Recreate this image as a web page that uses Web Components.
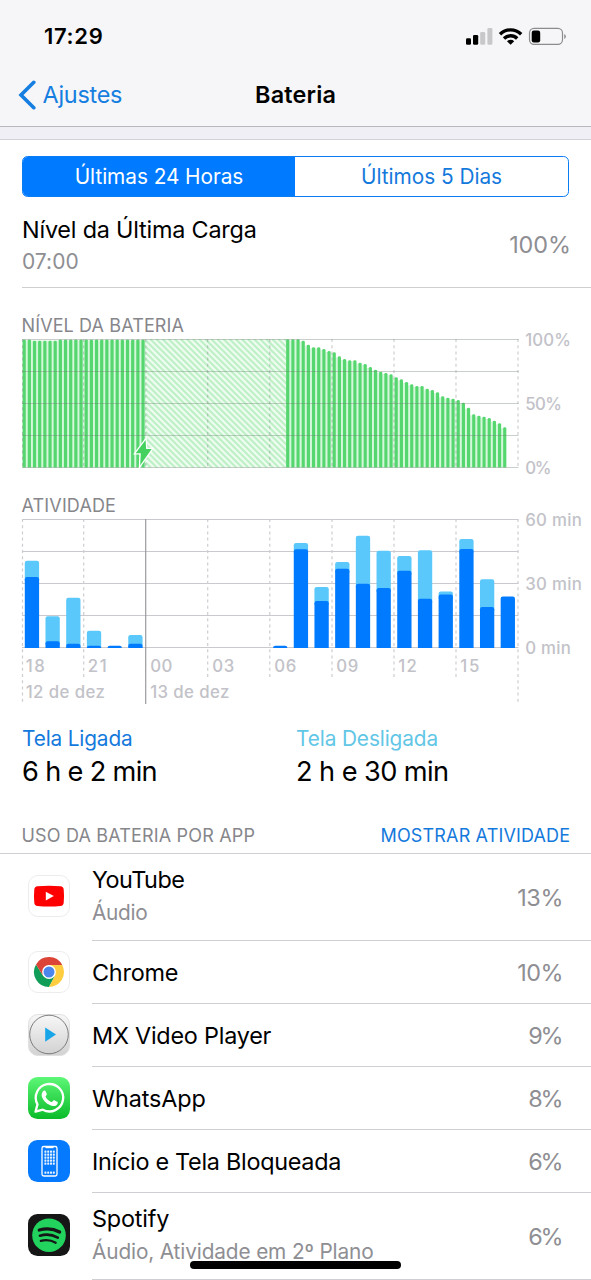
<!DOCTYPE html>
<html lang="pt-BR">
<head>
<meta charset="utf-8">
<title>Bateria</title>
<style>
html,body{margin:0;padding:0;background:#fff}
body{width:591px;height:1280px;overflow:hidden;font-family:Inter,"Liberation Sans",sans-serif;color:#000}
</style>
</head>
<body>
<battery-screen></battery-screen>
<script>
const define=(name,html,setup)=>customElements.define(name,class extends HTMLElement{
  connectedCallback(){
    if(this.shadowRoot)return;
    const root=this.attachShadow({mode:'open'});
    const t=document.createElement('template');
    t.innerHTML=typeof html==='function'?html(this):html;
    root.appendChild(t.content.cloneNode(true));
    if(setup)setup(this,root);
  }
});
const BLUE='#007aff',SKY='#5ac8fa';

/* A single line of text whose tracking is adjusted to a given width. */
define('fit-text',el=>{
  const s=+el.getAttribute('size');
  return `<style>:host{display:block;white-space:pre;font-size:${s}px;line-height:${el.getAttribute('line')||26}px;font-weight:${el.getAttribute('weight')||400};color:${el.getAttribute('color')||'inherit'}}
  span{display:inline-block}</style><span><slot></slot></span>`;
},(el,root)=>{
  const span=root.querySelector('span'),n=el.textContent.length;
  const target=+el.getAttribute('fit')+ +el.getAttribute('size')*0.08;
  const ls=(target-span.getBoundingClientRect().width)/(n-1);
  span.style.letterSpacing=ls.toFixed(3)+'px';
  span.style.marginRight=(-ls).toFixed(3)+'px';
});

define('status-bar',`<style>:host{display:flex;justify-content:space-between;align-items:center;height:60px;box-sizing:border-box;padding:12px 21px 0 44px}
svg{display:block}</style>
<fit-text size="22" weight="600" fit="57">17:29</fit-text>
<svg width="110" height="30" viewBox="460 20 110 30">
<rect x="466" y="37.3" width="5" height="6.5" rx="1.3"/><rect x="473" y="34" width="5.2" height="9.8" rx="1.3"/>
<rect x="480.2" y="31" width="5" height="12.8" rx="1.3" fill="#c8c8ca"/><rect x="487.4" y="27" width="5" height="16.8" rx="1.3" fill="#c8c8ca"/>
<g fill="none" stroke="#000" stroke-width="3.4"><path d="M500 33.2a15.2 15.2 0 0 1 21.2 0"/><path d="M504 37.5a9.4 9.4 0 0 1 13.2 0"/></g>
<path d="M510.6 43.8l-3.6-3.6a5.2 5.2 0 0 1 7.2 0z"/>
<rect x="529.5" y="27.4" width="33" height="16" rx="4.6" fill="none" stroke="#8c8c8e" stroke-width="1.2"/>
<rect x="531.7" y="29.5" width="8.5" height="12" rx="2.2"/><path d="M564.4 33v5a3 3 0 0 0 0-5z" fill="#777"/>
</svg>`);

define('nav-bar',`<style>:host{display:grid;grid-template-columns:1fr auto 1fr;align-items:center;height:66px;padding:0 18px;border-bottom:1px solid #b9b9bd}
.back{display:flex;align-items:center;gap:5.5px;color:#157ee0;padding-top:3px}svg{display:block}.t{padding-top:3px}</style>
<div class="back"><svg width="19" height="30" viewBox="0 0 19 30"><path d="M15.8 2.3L3 15l12.8 12.7" fill="none" stroke="#157ee0" stroke-width="3.6" stroke-linecap="round" stroke-linejoin="miter"/></svg>
<fit-text size="23.4" fit="78" line="28">Ajustes</fit-text></div>
<fit-text class="t" size="23.4" weight="600" fit="79" line="28">Bateria</fit-text>`);

define('segmented-control',`<style>:host{display:grid;grid-template-columns:272px 1fr;height:41px;margin:0 22px;box-sizing:border-box;border-radius:5.5px;overflow:hidden;border:1.5px solid #0a7cf5;background:#fff}
div{display:flex;align-items:center;justify-content:center;color:#1479dc;padding-top:1.5px}.on{background:#007aff;color:#fff}</style>
<div class="on"><fit-text size="20.8" fit="167">Últimas 24 Horas</fit-text></div><div><fit-text size="20.8" fit="139.5">Últimos 5 Dias</fit-text></div>`);

define('last-charge',`<style>:host{display:flex;justify-content:space-between;align-items:center;height:91px;box-sizing:border-box;margin-left:22px;padding:6px 20px 0 0;border-bottom:1px solid #cfcfd2}
.g{display:grid;gap:5px}</style>
<div class="g"><fit-text size="23.4" line="28" fit="233">Nível da Última Carga</fit-text><fit-text size="21" fit="55" color="#8e8e93">07:00</fit-text></div>
<fit-text size="23.4" line="28" fit="60" color="#8e8e93">100%</fit-text>`);

define('section-head',el=>`<style>:host{display:flex;align-items:flex-end;justify-content:space-between;box-sizing:border-box;padding:0 21px 0 21.5px;color:#86868b}</style><slot></slot>`);

const xs=[22.5,83.7,145.7,207.7,269.8,332,394,456,518];
const txt=(x,y,w,s,size=16.8)=>`<text x="${x-.8}" y="${y}" textLength="${w+1.6}" lengthAdjust="spacing" font-size="${size}" font-weight="450" fill="#c2c2c8">${s}</text>`;

define('battery-chart',()=>{
  const z=[88,88,88,92,104,112,112,117,123,127,139,147,151,151,158,162,171,179,185,189,193,202,208,216,223,228,228,236,240,247,259,263,266,270,278,293,313,317,320,324,332,340,352];
  const step=5.167,bx=i=>22.6+i*step;
  let light='',bars='';
  const bar=(i,y)=>{
    bars+=`<path d="M${bx(i)} 467.5V${y+1.2}q0-1.2 1.6-1.2t1.6 1.2V467.5z"/>`;
  };
  for(let i=0;i<24;i++)bar(i,i>1&&i<7?340.8:339.4);
  z.forEach((v,k)=>{const y=310+v/3;bar(51+k,y);
    if(k<z.length-1){const y2=310+z[k+1]/3+1;light+=`<rect x="${bx(51+k)+3}" y="${y2}" width="2.3" height="${467.5-y2}"/>`}});
  let stripes='';
  for(let x=10;x<290;x+=6.1)stripes+=`<path d="M${x} 339l129 129"/>`;
  const hs=[339.5,371.5,403.5,435.5,467.5].map(y=>`<path d="M22 ${y}H518.5"/>`).join('');
  const vs=xs.map(x=>`<path d="M${x} 339V468"/>`).join('');
  return `<style>:host{display:block}svg{display:block;overflow:visible}</style>
  <svg width="591" height="140" viewBox="0 337 591 140">
  <defs><clipPath id="c"><rect x="146" y="339" width="140.5" height="128.5"/></clipPath></defs>
  <g fill="#d4f8da"><rect x="22.6" y="340.5" width="123.4" height="127"/>${light}</g>
  <rect x="146" y="339" width="140.5" height="128.5" fill="#eefcf0"/>
  <g clip-path="url(#c)" stroke="#bdf0c6" stroke-width="2.1">${stripes}</g>
  <g fill="#56d66f">${bars}</g>
  <g stroke="#6b7b70" stroke-opacity=".36">${hs}</g>
  <g stroke="#808086" stroke-opacity=".42" stroke-width="1.1" stroke-dasharray="3 3.2">${vs}</g>
  <path d="M145.6 440l-10 13.200h5.200l-.6 12 11.500-16.200h-5.600z" fill="#45d160" stroke="#fff" stroke-width="2.600" paint-order="stroke"/>
  ${txt(526,346,44,'100%')}${txt(526,410,35,'50%')}${txt(526,474,24.5,'0%')}
  </svg>`;
});

define('activity-chart',()=>{
  const d=[[0,560.8,577],[1,616.3,641.3],[2,597.7,643.7],[3,630.8,645.7],[4,0,645.7],[5,635,643.7],[12,0,645.7],[13,543,549.3],[14,587,601],[15,562,568.7],[16,535.8,583.7],[17,550.7,588],[18,556,570.7],[19,550.3,598.7],[20,591.5,594.5],[21,539,549],[22,579.3,607],[23,0,596.5]];
  const shape=(x,y,b,c)=>{const r=Math.min(2.2,b-y);return `<path fill="${c}" d="M${x} ${b}V${y+r}q0-${r} ${r}-${r}h${14.3-2*r}q${r} 0 ${r} ${r}V${b}z"/>`};
  const bars=d.map(([i,t,k])=>{const x=24.8+i*20.69;return (t?shape(x,t,Math.min(k+4,648),SKY):'')+shape(x,k,648,BLUE)}).join('');
  const hs=[519.5,551.5,583.5,615.5,647.5].map(y=>`<path d="M22 ${y}H518.5"/>`).join('');
  const vs=xs.map((x,i)=>i===2?'':`<path d="M${x} 519V${i===0||i===8?704:680}"/>`).join('');
  const hrs=[['18',26.5,17.5],['21',88.5,17.5],['00',151,20.5],['03',213,20.5],['06',275,20.5],['09',337,20.5],['12',399,17],['15',461,17.5]];
  return `<style>:host{display:block}svg{display:block;overflow:visible}</style>
  <svg width="591" height="190" viewBox="0 517 591 190">
  <g stroke="#c9c9ce">${hs}</g>
  <g stroke="#cdcdd2" stroke-width="1.2" stroke-dasharray="3 3.2">${vs}</g>
  <path d="M145.7 519V704" stroke="#9a9a9f" stroke-width="1.2"/>
  ${bars}
  ${hrs.map(([s,x,w])=>txt(x,671.6,w,s)).join('')}
  ${txt(26.5,697.8,77.5,'12 de dez')}${txt(151,697.8,77.5,'13 de dez')}
  ${txt(526,525.8,55,'60 min')}${txt(526,589.8,55,'30 min')}${txt(526,654,44,'0 min')}
  </svg>`;
});

define('usage-totals',`<style>:host{display:grid;grid-template-columns:274px 1fr;height:103px;box-sizing:border-box;padding:19.4px 21px 0 22px}
div{display:flex;flex-direction:column;gap:3px}</style>
<div><fit-text size="20.8" fit="109" color="#1479dc">Tela Ligada</fit-text><fit-text size="27.2" line="34" fit="133.5">6 h e 2 min</fit-text></div>
<div><fit-text size="20.8" fit="140.5" color="#62c6e6">Tela Desligada</fit-text><fit-text size="27.2" line="34" fit="151">2 h e 30 min</fit-text></div>`);

define('app-row',el=>{
  const a=n=>el.getAttribute(n),sub=a('sub');
  return `<style>:host{display:flex;align-items:stretch;height:${sub?87:63}px;padding-left:28px;box-sizing:border-box}
  .i{display:flex;align-items:center;width:64px;flex:none;padding-bottom:${sub?3:1}px;box-sizing:border-box}
  .b{flex:1;display:flex;justify-content:space-between;align-items:center;border-bottom:1px solid #cfcfd3;padding-right:27.5px}
  .t{display:grid;gap:5.6px;padding:${sub?'0 0 2px':'2px 0 0'}}.p{padding-top:1px}</style>
  <div class="i"><slot></slot></div><div class="b"><div class="t"><fit-text size="23.4" line="28" fit="${a('w')}">${a('name')}</fit-text>
  ${sub?`<fit-text size="20.8" fit="${a('subw')}" color="#8e8e93">${sub}</fit-text>`:''}</div>
  <fit-text class="p" size="23.4" line="28" fit="${a('pct').length>2?44.5:33.5}" color="#8e8e93">${a('pct')}</fit-text></div>`;
});

const frame='<rect x=".5" y=".5" width="41" height="41" rx="9.3" fill="#fff" stroke="#ececee"/>';
const icons={
youtube:frame+'<path d="M9.500 11.200q11.500-1 23 0 3 .3 3.200 3.200.7 6.700 0 13.300-.2 2.900-3.200 3.200-11.500 1-23 0-3-.3-3.200-3.200-.7-6.600 0-13.300.2-2.900 3.200-3.200z" fill="#f00"/><path d="M17.800 16.700l8 4.400-8 4.400z" fill="#fff"/>',
chrome:frame+'<path d="M14.940 24.500L8 13.500A15 15 0 0 0 21 36L27.060 24.500z" fill="#0f9d58"/><path d="M21 14H34.250A15 15 0 0 1 21 36L27.060 24.500z" fill="#ffcd40"/><path d="M8 13.500A15 15 0 0 1 34.250 14H21L14.940 24.500z" fill="#db4437"/><circle cx="21" cy="21" r="6.900" fill="#fff"/><circle cx="21" cy="21" r="5.500" fill="#4a86ec"/>',
mx:'<defs><linearGradient id="g" x2="0" y2="1"><stop stop-color="#f7f7f7"/><stop offset="1" stop-color="#d2d2d2"/></linearGradient></defs><rect x=".5" y=".5" width="41" height="41" rx="9.3" fill="url(#g)" stroke="#e0e0e0"/><circle cx="21" cy="20.500" r="19.300" fill="url(#g)" stroke="#707070" stroke-width=".9"/><path d="M17.200 13.500l10.800 7-10.800 7.200z" fill="#18a6e9"/>',
whatsapp:'<defs><linearGradient id="g" x2="0" y2="1"><stop stop-color="#5df777"/><stop offset="1" stop-color="#0abb29"/></linearGradient></defs><rect width="42" height="42" rx="9.500" fill="url(#g)"/><path d="M7.500 34.700l2-7.300A13.700 13.700 0 1 1 14.800 32.700z" fill="none" stroke="#fff" stroke-width="2.300" stroke-linejoin="round"/><path d="M15.600 13.800c.8-.7 1.600-.5 2 .4l1.200 2.800c.2.600-.1 1-.9 1.900-.5.500-.4.800-.1 1.300 1.300 2.200 3 3.600 5.400 4.700.5.200.8.200 1.200-.3 1.100-1.400 1.300-1.600 1.900-1.300l2.900 1.400c.6.300.7.600.5 1.500-.5 2.300-3 3.200-4.800 2.800-5.700-1.200-9.500-4.900-11-9.200-.7-2.500.3-4.900 1.700-6z" fill="#fff"/>',
home:'<rect width="42" height="42" rx="9.500" fill="#067aff"/><rect x="14" y="6.500" width="15" height="29.500" rx="1.800" fill="none" stroke="#fff" stroke-width="1.300"/><path d="M17.500 6.500h8v1.700h-8z" fill="#fff"/><g fill="#e4f1ff">'+[11,14,17,20,23,32].map(y=>[16.4,19.2,22,24.8].map(x=>`<rect x="${x}" y="${y-.4}" width="2" height="2.100" rx=".4"/>`).join('')).join('')+'</g>',
spotify:'<rect width="42" height="42" rx="9.500" fill="#161616"/><circle cx="21" cy="21.200" r="16.800" fill="#22d35e"/><g fill="none" stroke="#161616" stroke-linecap="round"><path d="M11.300 16c7-2 14.500-1.200 20.300 2" stroke-width="3.300"/><path d="M12 21.700c6-1.700 12.500-1 17.800 1.900" stroke-width="2.700"/><path d="M12.800 26.900c5.200-1.300 10.300-.8 14.900 1.900" stroke-width="2.200"/></g>'};
define('app-icon',el=>`<style>:host{display:block;height:42px}svg{display:block}</style><svg width="42" height="42" viewBox="0 0 42 42">${icons[el.getAttribute('name')]}</svg>`);

define('battery-screen',`<style>:host{display:block;position:relative;width:591px;height:1280px;overflow:hidden}
header{background:#f6f6f8}.gap{height:12px;background:#efeff5;border-bottom:1px solid #d2d2d7}
main{padding-top:16px}.h1{height:49px}.h2{height:40px}.h1 fit-text,.h2 fit-text{margin-bottom:-1px}.h3{height:44px;padding-bottom:5px;border-bottom:1px solid #cfcfd3}
.home{position:absolute;left:190px;top:1261px;width:211px;height:7.500px;border-radius:4px;background:#000}</style>
<header><status-bar></status-bar><nav-bar></nav-bar></header><div class="gap"></div>
<main><segmented-control></segmented-control><last-charge></last-charge>
<section-head class="h1"><fit-text size="18" line="24" fit="161">NÍVEL DA BATERIA</fit-text></section-head><battery-chart></battery-chart>
<section-head class="h2"><fit-text size="18" line="24" fit="93">ATIVIDADE</fit-text></section-head><activity-chart></activity-chart>
<usage-totals></usage-totals>
<section-head class="h3"><fit-text size="18" line="24" fit="232">USO DA BATERIA POR APP</fit-text><fit-text size="18" line="24" fit="188" color="#1479dc">MOSTRAR ATIVIDADE</fit-text></section-head>
<app-row name="YouTube" w="91" sub="Áudio" subw="54" pct="13%"><app-icon name="youtube"></app-icon></app-row>
<app-row name="Chrome" w="84.500" pct="10%"><app-icon name="chrome"></app-icon></app-row>
<app-row name="MX Video Player" w="177.500" pct="9%"><app-icon name="mx"></app-icon></app-row>
<app-row name="WhatsApp" w="112" pct="8%"><app-icon name="whatsapp"></app-icon></app-row>
<app-row name="Início e Tela Bloqueada" w="247.500" pct="6%"><app-icon name="home"></app-icon></app-row>
<app-row name="Spotify" w="75.500" sub="Áudio, Atividade em 2º Plano" subw="280" pct="6%"><app-icon name="spotify"></app-icon></app-row>
</main><div class="home"></div>`);
</script>
</body>
</html>
